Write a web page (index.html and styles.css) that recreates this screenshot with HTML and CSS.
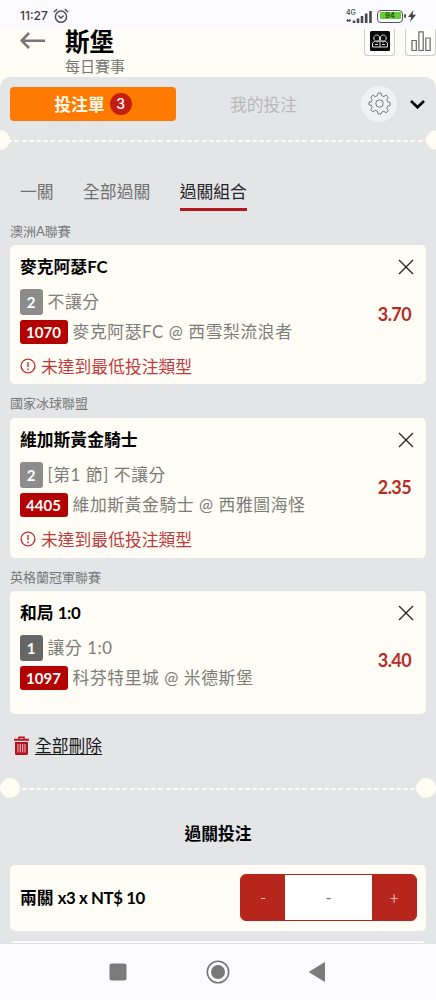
FILE: index.html
```html
<!DOCTYPE html>
<html lang="zh-Hant">
<head>
<meta charset="utf-8">
<title>投注單</title>
<link rel="stylesheet" href="styles.css">
</head>
<body>
<div class="phone">
  <div class="status">
    <span class="clock">11:27</span>
    <svg class="alarm" width="16" height="16" viewBox="0 0 16 16" fill="none" stroke="#4b4b4b" stroke-width="1.5" stroke-linecap="round"><circle cx="8" cy="8.7" r="5.6"/><path d="M5.8 8l2.2 2 2.2-2M1.2 3.8l2.6-2.3M14.8 3.8l-2.6-2.3"/></svg>
    <div class="network"><span class="gen">4G</span>
      <svg width="26" height="13" viewBox="0 0 26 13" fill="none" stroke="#484848"><path d="M.5 10.500h4.500M1.700 9v3M3.700 9v3" stroke-width="1"/><path d="M8 10.500v2.500M12 8.500v4.500M16 6v7M20.200 3.500V13M24.500 1v12" stroke-width="2.600"/></svg>
    </div>
    <div class="battery"><span>94</span></div>
    <svg class="bolt" width="8" height="12" viewBox="0 0 8 12" fill="#444"><path d="M5.5 0L0 7h3.2L2 12l6-7.3H4.6z"/></svg>
  </div>
  <header class="header">
    <svg class="back" width="26" height="17" viewBox="0 0 26 17" fill="none" stroke="#777" stroke-width="2.6" stroke-linejoin="round"><path d="M25 8.7H2M9 1L1.7 8.7 9 16"/></svg>
    <div class="heading"><h1>斯堡</h1><p>每日賽事</p></div>
    <div class="tool tool-left">
      <svg width="20" height="20" viewBox="0 0 20 20"><rect width="20" height="20" rx="1.5" fill="#090909"/><g fill="none" stroke="#ddd" stroke-width="1"><path d="M4.300 9.500C3 5.500 5 4 6.800 4s3.700 1.500 2.400 5.500M10.800 9.500C9.500 5.500 11.500 4 13.300 4s3.700 1.500 2.400 5.500M2.500 16v-4l2.800-2h9.400l2.800 2v4zM5.500 9.800l1.500 1.500 2-1.500M11.500 9.800l1.700 1.500 1.700-1.500M10 10v6M5 13.500h3M12 13.500h3"/></g></svg>
    </div>
    <div class="tool tool-right">
      <svg width="20" height="20" viewBox="0 0 20 20" fill="#fff" stroke="#666" stroke-width="1.2"><path d="M1 9.500h4.300v10H1zM7.900.8h4.300v18.700H7.900zM14.800 7h4.300v12.500h-4.300z"/></svg>
    </div>
  </header>
  <main class="panel">
    <div class="switcher">
      <div class="slip">投注單<span class="count">3</span></div>
      <div class="mine">我的投注</div>
      <div class="gear"><svg width="23" height="23" viewBox="0 0 23 23" fill="none" stroke="#777" stroke-width="1" stroke-linejoin="round"><path d="M10 1h3l.6 2.700 2.200.9 2.400-1.500 2.100 2.100-1.500 2.400.9 2.200 2.300.7v3l-2.300.6-.9 2.200 1.500 2.400-2.100 2.100-2.400-1.500-2.200.9L13 22h-3l-.6-2.800-2.200-.9-2.400 1.500-2.100-2.100 1.500-2.400-.9-2.200L1 13v-3l2.300-.2.900-2.200-1.500-2.400 2.100-2.100 2.400 1.500 2.200-.9z"/><circle cx="11.500" cy="11.500" r="3.700"/></svg></div>
      <svg class="chevron" width="15" height="9" viewBox="0 0 15 9" fill="none" stroke="#000" stroke-width="2.600"><path d="M1 1l6.500 6.300L14 1"/></svg>
    </div>
    <div class="divider divider-top"></div>
    <nav class="tabs"><span>一關</span><span>全部過關</span><span class="active">過關組合</span></nav>

    <div class="league">澳洲A聯賽</div>
    <section class="card">
      <div class="pick"><h2>麥克阿瑟FC</h2><svg class="close" viewBox="0 0 16 16"><path d="M1 1l14 14M15 1L1 15"/></svg></div>
      <div class="line market"><b class="side">2</b><span>不讓分</span></div>
      <div class="line match"><b class="code">1070</b><span>麥克阿瑟FC @ 西雪梨流浪者</span></div>
      <div class="warning"><svg viewBox="0 0 16 16"><circle cx="8" cy="8" r="6.900"/><path d="M8 4v5M8 10.500v1.700"/></svg>未達到最低投注類型</div>
      <div class="odds">3.70</div>
    </section>

    <div class="league">國家冰球聯盟</div>
    <section class="card">
      <div class="pick"><h2>維加斯黃金騎士</h2><svg class="close" viewBox="0 0 16 16"><path d="M1 1l14 14M15 1L1 15"/></svg></div>
      <div class="line market"><b class="side">2</b><span>[第1 節] 不讓分</span></div>
      <div class="line match"><b class="code">4405</b><span>維加斯黃金騎士 @ 西雅圖海怪</span></div>
      <div class="warning"><svg viewBox="0 0 16 16"><circle cx="8" cy="8" r="6.900"/><path d="M8 4v5M8 10.500v1.700"/></svg>未達到最低投注類型</div>
      <div class="odds">2.35</div>
    </section>

    <div class="league">英格蘭冠軍聯賽</div>
    <section class="card short">
      <div class="pick"><h2>和局 <span class="latin">1:0</span></h2><svg class="close" viewBox="0 0 16 16"><path d="M1 1l14 14M15 1L1 15"/></svg></div>
      <div class="line market"><b class="side dark">1</b><span>讓分 1:0</span></div>
      <div class="line match"><b class="code">1097</b><span>科芬特里城 @ 米德斯堡</span></div>
      <div class="odds">3.40</div>
    </section>

    <div class="remove"><svg width="15" height="19" viewBox="0 0 15 19"><path d="M5 3V1.200h5V3" fill="none" stroke="#b5121b" stroke-width="1.500"/><path d="M0 2.800h15v2H0zM1 6h13v11.500a1.500 1.500 0 0 1-1.500 1.500h-10A1.500 1.500 0 0 1 1 17.500z" fill="#b5121b"/><path d="M4 8v8.500M6.300 8v8.500M8.700 8v8.500M11 8v8.500" stroke="#eadcdd" stroke-width=".9"/></svg><span>全部刪除</span></div>
    <div class="divider divider-bottom"></div>
    <h2 class="combo-title">過關投注</h2>
    <section class="stake">
      <h2>兩關 <span class="latin">x3 x NT$ 10</span></h2>
      <div class="stepper"><span class="step">-</span><span class="amount">-</span><span class="step">+</span></div>
    </section>
    <section class="stake-next"></section>
  </main>
  <footer class="system">
    <svg width="18" height="18" viewBox="0 0 18 18"><rect x=".5" y=".5" width="17" height="17" rx="2" fill="#7b7b7b"/></svg>
    <svg width="24" height="24" viewBox="0 0 24 24"><circle cx="12" cy="12" r="10.700" fill="none" stroke="#777" stroke-width="1.600"/><circle cx="12" cy="12" r="7" fill="#777"/></svg>
    <svg width="18" height="22" viewBox="0 0 18 22"><path d="M16.500 1.700v18.600L1.500 11z" fill="#7b7b7b" stroke="#7b7b7b" stroke-linejoin="round"/></svg>
  </footer>
</div>
</body>
</html>
```

FILE: styles.css
```css
* { box-sizing: border-box; }
body { margin: 0; font-family: Lato, "Noto Sans CJK TC", sans-serif; font-size: 16.800px; color: #000; }
h1, h2, p { margin: 0; }
svg { display: block; flex: none; }
.phone { width: 436px; height: 1000px; display: flex; flex-direction: column; overflow: hidden; background: #fffdf5; }

.status { height: 29px; flex: none; display: flex; align-items: center; padding: 3px 20px 0 20px; background: #fbfbff; }
.clock { width: 32px; font: 500 12px/16px Inter, sans-serif; color: #3c3c3c; white-space: nowrap; }
.alarm { margin-left: 1px; }
.network { position: relative; width: 26px; height: 13px; margin-left: auto; }
.gen { position: absolute; left: 0; top: -1px; font: 500 7px/8px Inter, sans-serif; color: #444; }
.battery { position: relative; width: 26px; height: 13px; margin-left: 5px; padding: 1.500px; border: 1.500px solid #555; border-radius: 4px; }
.battery::after { content: ""; position: absolute; right: -4px; top: 3px; width: 2px; height: 4px; border-radius: 1px; background: #555; }
.battery span { display: block; height: 7px; border-radius: 1px; background: #64cb35; font: 700 7px/7px Inter, sans-serif; text-align: center; color: #254d13; }
.bolt { margin-left: 5px; }

.header { height: 48px; flex: none; display: flex; align-items: flex-start; }
.back { margin: 3px 0 0 20px; }
.heading { margin-left: 19px; }
.heading h1 { height: 26px; font-size: 24.500px; line-height: 25px; font-weight: 700; }
.heading p { font-size: 15px; line-height: 22px; color: #777; }
.tool { width: 31px; height: 27px; border: 1px solid #ccc; border-top: 0; border-radius: 0 0 4px 4px; display: flex; justify-content: center; padding-top: 2px; background: #fffefa; }
.tool-left { margin-left: auto; }
.tool-right { margin-left: 10px; }

.panel { height: 866px; flex: none; overflow: hidden; display: flex; flex-direction: column; padding: 0 10px; background: #e4e5e7; border-radius: 11px 11px 0 0; }
.switcher { height: 53px; flex: none; display: flex; align-items: center; }
.slip { width: 166px; height: 34px; display: flex; align-items: center; justify-content: center; gap: 5px; border-radius: 4px; background: #ff7a00; color: #fff8e8; font-weight: 700; }
.count { width: 22px; height: 22px; border-radius: 50%; background: #c41d12; color: #fff; font: 500 14px/22px Inter, sans-serif; text-align: center; }
.mine { margin-left: 54px; color: #b8b8b9; }
.gear { width: 36px; height: 36px; margin-left: auto; border-radius: 50%; background: #f0f1f3; display: flex; align-items: center; justify-content: center; }
.chevron { margin: 2px 1px 0 13px; }

.divider { position: relative; height: 20px; flex: none; margin: 0 -10px; background: repeating-linear-gradient(90deg, #fffdf3 0 5px, transparent 5px 7.200px) 0 10px / 100% 2px no-repeat; }
.divider::before, .divider::after { content: ""; position: absolute; top: 0; width: 20px; height: 20px; border-radius: 50%; background: #fffdf3; }
.divider-top::before { left: -10px; }
.divider-top::after { right: -10px; }
.divider-bottom::before { left: 0; }
.divider-bottom::after { right: 0; }

.tabs { height: 45px; flex: none; display: flex; gap: 29.500px; margin: 26px 0 0 10px; color: #707070; }
.tabs span { height: 35px; line-height: 31px; }
.tabs .active { border-bottom: 3px solid #b2171d; color: #222; }

.league { height: 33.600px; flex: none; font-size: 13px; line-height: 38px; color: #777; }
.tabs + .league { height: 23.800px; line-height: 20px; }
.card { position: relative; height: 139.700px; flex: none; padding: 10px; border-radius: 5px; background: #fffdf5; }
.card.short { height: 122.500px; }
.pick { height: 24px; margin-bottom: 10px; display: flex; align-items: center; justify-content: space-between; }
h2 { font-size: 16.800px; line-height: 24px; font-weight: 700; }
.latin { letter-spacing: -.4px; }
.close { width: 16px; height: 16px; margin-right: 2px; fill: none; stroke: #222; stroke-width: 1.300; }
.line { display: flex; align-items: center; gap: 5px; margin-left: -.5px; color: #7c7c7a; letter-spacing: .6px; white-space: nowrap; line-height: 24px; }
.market { height: 26px; margin-bottom: 5px; }
.match { height: 24px; }
.line b { letter-spacing: 0; color: #fff; font-size: 15px; border-radius: 3px; text-align: center; }
.side { width: 23px; height: 26px; line-height: 27px; background: #8c8c8c; }
.side.dark { background: #666; }
.code { width: 48px; height: 24px; line-height: 24px; background: #b30000; }
.warning { height: 24px; margin-top: 10px; display: flex; align-items: center; gap: 5px; color: #bd3b3d; }
.warning svg { width: 16px; height: 16px; fill: none; stroke: #bd3437; stroke-width: 1.400; }
.odds { position: absolute; right: 15px; top: 57px; font-size: 18px; line-height: 24px; font-weight: 700; letter-spacing: -.6px; color: #b42e27; }

.remove { height: 24px; flex: none; margin: 20px 0 0 4px; display: flex; align-items: center; gap: 6px; }
.remove span { line-height: 20px; text-decoration: underline; text-underline-offset: 2px; text-decoration-thickness: 1px; color: #171717; }
.divider-bottom { margin-top: 20px; }
.combo-title { flex: none; margin: 24px 0 19px; text-align: center; }
.stake { height: 66px; flex: none; display: flex; align-items: center; justify-content: space-between; padding: 0 9px 0 10px; border-radius: 5px; background: #fffdf5; }
.stepper { width: 177px; height: 47px; display: flex; border: 1px solid #b7261c; border-radius: 6px; overflow: hidden; background: #b7261c; }
.step { width: 44px; line-height: 46px; text-align: center; color: #fff; font-weight: 300; }
.amount { flex: 1; line-height: 45px; text-align: center; background: #fff; color: #777; }
.stake-next { height: 30px; flex: none; margin-top: 10px; border-radius: 5px; background: #fffdf5; }

.system { height: 57px; flex: none; display: flex; align-items: center; padding-left: 109px; border-top: 1px solid #dce0e8; background: #fbfbff; }
.system svg:nth-child(2) { margin-left: 79px; }
.system svg:nth-child(3) { margin-left: 78px; }
```
